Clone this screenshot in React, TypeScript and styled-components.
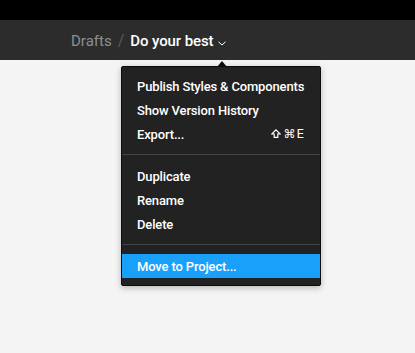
import React from "react";
import styled, { createGlobalStyle } from "styled-components";

const Global = createGlobalStyle`
  html, body { margin: 0; padding: 0; background: #f4f4f4; }
  body { font-family: Roboto, "Liberation Sans", Arial, sans-serif; -webkit-font-smoothing: antialiased; }
`;

const Page = styled.div`
  position: relative;
  width: 415px;
  height: 353px;
  overflow: hidden;
  background: #f4f4f4;
`;

const TopStrip = styled.div`
  height: 20px;
  background: #000;
`;

const Header = styled.div`
  height: 40px;
  background: #2c2c2c;
  display: flex;
  align-items: center;
  padding-left: 71px;
  font-size: 15px;
  gap: 5px;
`;

const Crumb = styled.span<{ $current?: boolean }>`
  color: ${(p) => (p.$current ? "#ffffff" : "#8e8e8e")};
  font-weight: ${(p) => (p.$current ? 500 : 400)};
  letter-spacing: ${(p) => (p.$current ? "-0.1px" : "0")};
  padding-top: 1px;
`;

const Slash = styled.span`
  color: #5a5a5a;
  font-size: 16px;
  margin: 0 1px;
`;

const Chevron = styled.svg`
  margin-top: 6px;
`;

const Menu = styled.div`
  position: absolute;
  left: 121px;
  top: 66px;
  width: 198px;
  padding: 7px 0 7px;
  background: #222222;
  border: 1px solid #0c0c0c;
  border-radius: 2px;
  box-shadow: 0 2px 6px rgba(0, 0, 0, 0.25);
  &::before {
    content: "";
    position: absolute;
    top: -6px;
    left: 95px;
    border-left: 5px solid transparent;
    border-right: 5px solid transparent;
    border-bottom: 6px solid #0c0c0c;
  }
`;

const Item = styled.div<{ $active?: boolean }>`
  height: 24px;
  display: flex;
  align-items: center;
  justify-content: space-between;
  padding: 0 16px 0 15px;
  font-size: 13px;
  font-weight: 500;
  letter-spacing: -0.15px;
  white-space: nowrap;
  color: #ffffff;
  background: ${(p) => (p.$active ? "#18a0fb" : "transparent")};
`;

const Shortcut = styled.span`
  display: flex;
  align-items: center;
  gap: 2px;
  font-family: "DejaVu Sans", sans-serif;
  color: #ffffff;
  font-size: 12px;
  letter-spacing: 1px;
  margin-right: -1px;
`;

const ShiftIcon = styled.svg`
  display: block;
  margin-top: -1px;
`;

const Separator = styled.div`
  height: 1px;
  background: #444444;
  margin: 8px 0 9px;
`;

export default function App() {
  return (
    <Page>
      <Global />
      <TopStrip />
      <Header>
        <Crumb>Drafts</Crumb>
        <Slash>/</Slash>
        <Crumb $current>Do your best</Crumb>
        <Chevron width="8" height="5" viewBox="0 0 8 5">
          <path d="M0.5 0.8 L4 4 L7.5 0.8" fill="none" stroke="#ffffff" strokeWidth="1" />
        </Chevron>
      </Header>
      <Menu>
        <Item>Publish Styles &amp; Components</Item>
        <Item>Show Version History</Item>
        <Item>
          <span>Export...</span>
          <Shortcut>
            <ShiftIcon width="10" height="9" viewBox="0 0 10 9">
              <path
                d="M5 0.8 L9.2 5 L6.8 5 L6.8 8.3 L3.2 8.3 L3.2 5 L0.8 5 Z"
                fill="none"
                stroke="#ffffff"
                strokeWidth="1.2"
                strokeLinejoin="miter"
              />
            </ShiftIcon>
            <span>{"\u2318E"}</span>
          </Shortcut>
        </Item>
        <Separator />
        <Item>Duplicate</Item>
        <Item>Rename</Item>
        <Item>Delete</Item>
        <Separator />
        <Item $active>Move to Project...</Item>
      </Menu>
    </Page>
  );
}
